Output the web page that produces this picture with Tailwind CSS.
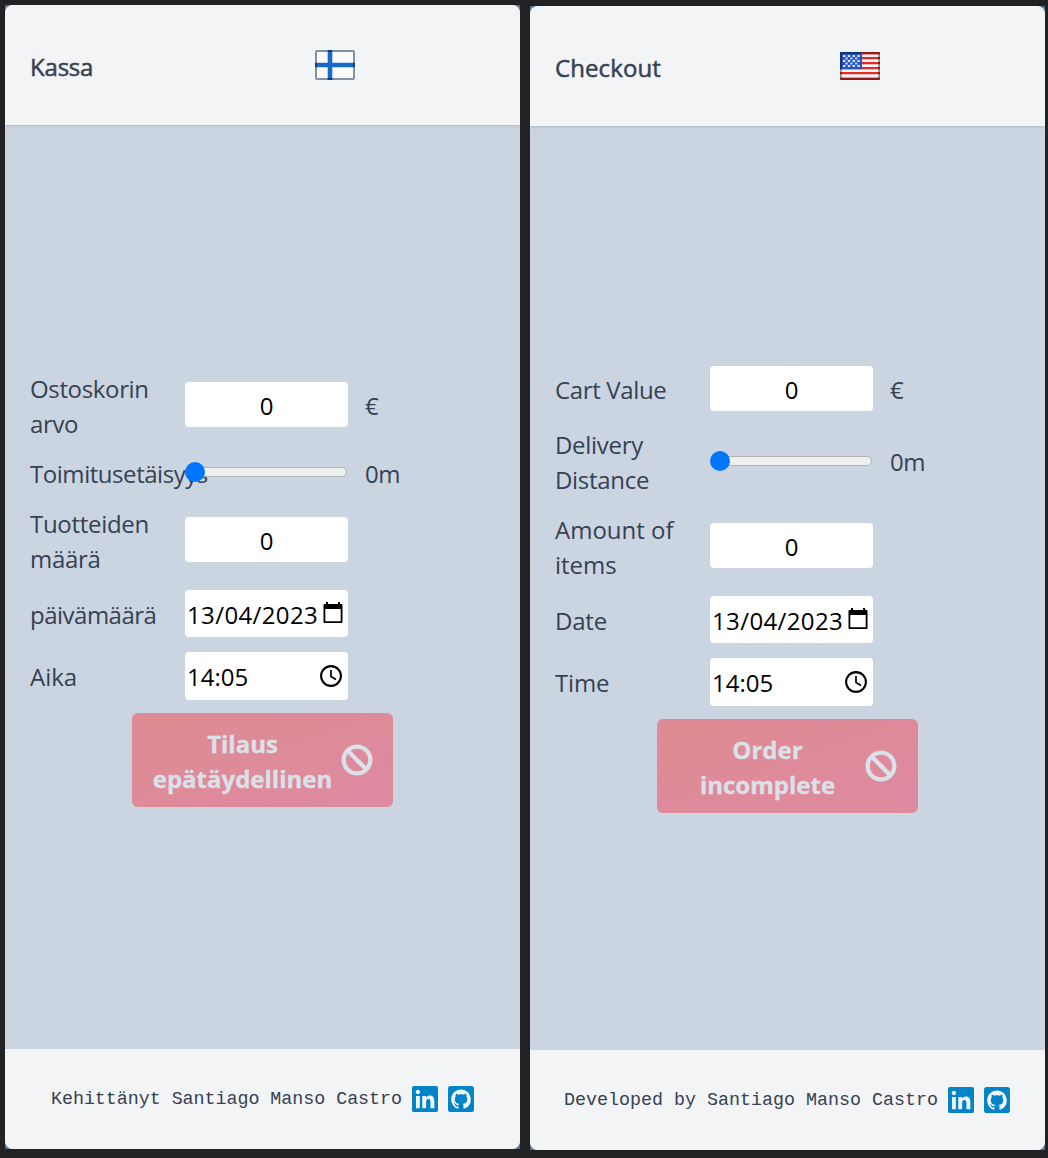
<!DOCTYPE html>
<html lang="en">
<head>
<meta charset="utf-8">
<title>Checkout</title>
<script src="https://cdn.jsdelivr.net/npm/@tailwindcss/browser@4"></script>
</head>
<body class="h-[1158px] w-[1048px] overflow-hidden bg-[#222224] font-['Open_Sans','Noto_Sans',sans-serif] text-2xl leading-[35px] text-gray-700">
<svg class="hidden">
  <symbol id="linkedin" viewBox="0 32 448 448"><path d="M416 32H31.9C14.3 32 0 46.5 0 64.3v383.4C0 465.5 14.3 480 31.9 480H416c17.6 0 32-14.5 32-32.3V64.3c0-17.8-14.4-32.3-32-32.3zM135.4 416H69V202.2h66.5V416zm-33.2-243c-21.3 0-38.5-17.3-38.5-38.5S80.9 96 102.2 96c21.2 0 38.5 17.3 38.5 38.5 0 21.3-17.2 38.5-38.5 38.5zm282.1 243h-66.4V312c0-24.8-.5-56.7-34.5-56.7-34.6 0-39.9 27-39.9 54.9V416h-66.4V202.2h63.7v29.2h.9c8.9-16.8 30.6-34.5 62.9-34.5 67.2 0 79.7 44.3 79.7 101.9V416z"/></symbol>
  <symbol id="github" viewBox="0 0 26 26"><rect width="26" height="26" rx="2.8"/><path fill="#f3f4f6" transform="translate(3.2 3.6) scale(1.225)" d="M8 0C3.58 0 0 3.58 0 8c0 3.54 2.29 6.53 5.47 7.59.4.07.55-.17.55-.38 0-.19-.01-.82-.01-1.49-2.01.37-2.53-.49-2.69-.94-.09-.23-.48-.94-.82-1.13-.28-.15-.68-.52-.01-.53.63-.01 1.08.58 1.23.82.72 1.21 1.87.87 2.33.66.07-.52.28-.87.51-1.07-1.78-.2-3.64-.89-3.64-3.95 0-.87.31-1.59.82-2.15-.08-.2-.36-1.02.08-2.12 0 0 .67-.21 2.2.82.64-.18 1.32-.27 2-.27s1.36.09 2 .27c1.53-1.04 2.2-.82 2.2-.82.44 1.1.16 1.92.08 2.12.51.56.82 1.27.82 2.15 0 3.07-1.87 3.75-3.65 3.95.29.25.54.73.54 1.48 0 1.07-.01 1.93-.01 2.2 0 .21.15.46.55.38A8.01 8.01 0 0 0 16 8c0-4.42-3.58-8-8-8z"/></symbol>
  <symbol id="ban" viewBox="0 0 32 32"><g fill="none" stroke="currentColor" stroke-width="4.3"><circle cx="16" cy="16" r="13.3"/><path d="M6.5 6.5l19 19"/></g></symbol>
  <symbol id="calendar" viewBox="0 0 20 22"><path fill-rule="evenodd" d="M3 0h2v2h10V0h2v2h1.5q1 0 1 1v17q0 1-1 1H1.500q-1 0-1-1V3q0-1 1-1H3zM2.300 7v12.200h15.400V7z"/></symbol>
  <symbol id="clock" viewBox="0 0 22 22"><g fill="none" stroke="currentColor"><circle cx="11" cy="11" r="9.900" stroke-width="2.100"/><path stroke-width="1.700" d="M11 5v6.500l5 3"/></g></symbol>
</svg>
<main class="grid grid-cols-[515px_515px] gap-x-2.5 pl-[5px] pt-[5px]">

  <section class="h-[1144px] bg-[#5f7590] rounded-[1px]">
    <div class="flex h-full flex-col overflow-hidden rounded-lg bg-[#cbd5e1]">
      <header class="z-10 flex h-[120px] shrink-0 items-center bg-gray-100 pl-[25px] shadow">
        <h1 class="w-[285px] pt-0.5 font-medium tracking-[-0.2px] [-webkit-text-stroke:0.5px]">Kassa</h1>
        <svg class="h-[30px] w-10" viewBox="0 0 40 30"><rect x="1" y="1" width="38" height="28" rx="1" fill="#fafafa" stroke="#82929f" stroke-width="2"/><path d="M12.700 2h4.600v26h-4.600zM2 12.700h36v4.600H2z" fill="#1969cb"/><path d="M12.700 0h4.600v2h-4.600zM12.700 28h4.600v2h-4.600zM0 12.700h2v4.600H0zM38 12.700h2v4.600h-2z" fill="#073d82"/></svg>
      </header>
      <div class="flex grow flex-col pl-[25px] pt-[247px]">
        <div class="grid grid-cols-[155px_163px_1fr] grid-rows-[70px_35px_70px_47px_48px] items-center gap-y-[15px]">
          <label class="-mt-0.5 w-[130px] tracking-[-0.35px]">Ostoskorin arvo</label>
          <div class="-mt-[5px] flex h-[45px] items-center justify-center rounded bg-white pt-px text-black">0</div>
          <span class="-mt-[3px] pl-[17px]">€</span>
          <label class="-mt-0.5 tracking-[-0.45px]">Toimitusetäisyys</label>
          <div class="relative -mt-[5px] flex h-5 items-center"><div class="h-2.5 w-[162px] rounded-full border border-[#b2b2b2] bg-[#efefef]"></div><div class="absolute left-0 size-5 rounded-full bg-[#0075ff]"></div></div>
          <span class="-mt-0.5 pl-[17px] tracking-[-0.5px]">0m</span>
          <label class="-mt-0.5 w-[130px] tracking-[-0.3px]">Tuotteiden määrä</label>
          <div class="-mt-[5px] flex h-[45px] items-center justify-center rounded bg-white pt-px text-black">0</div>
          <span></span>
          <label class="-mt-[2px] tracking-[-0.5px]">päivämäärä</label>
          <div class="-mt-[4px] flex h-[47px] items-center justify-between rounded bg-white pl-0.5 pr-[5px] text-black"><span class="pt-px tracking-[0.38px]">13/04/2023</span><svg class="mb-0.5 h-[22px] w-5 shrink-0"><use href="#calendar"/></svg></div>
          <span></span>
          <label class="-mt-[3px]">Aika</label>
          <div class="-mt-[4px] flex h-12 items-center justify-between rounded bg-white pl-0.5 pr-[6px] text-black"><span class="pt-px">14:05</span><svg class="size-[22px]"><use href="#clock"/></svg></div>
        </div>
        <button class="ml-[102px] mt-[11px] flex h-[94px] w-[261px] items-center rounded-md border-2 border-transparent bg-linear-to-br from-[#de8b92] to-[#de8aa1] pl-[17px] pr-[18px] font-bold text-[#dbe1e9]"><span class="w-[183px] pt-0.5 text-center [-webkit-text-stroke:0.3px]">Tilaus epätäydellinen</span><svg class="ml-[7px] size-8 shrink-0"><use href="#ban"/></svg></button>
      </div>
      <footer class="flex h-[100px] shrink-0 items-center bg-gray-100 pl-[46px] font-['Liberation_Mono',monospace] text-[18.33px]"><span class="w-[361px] whitespace-nowrap tracking-[-0.03px]">Kehittänyt Santiago Manso Castro</span><div class="flex gap-2.5 text-[#0284c7]"><svg class="size-[26px] fill-current"><use href="#linkedin"/></svg><svg class="size-[26px] fill-current"><use href="#github"/></svg></div></footer>
    </div>
  </section>

  <section class="mt-px h-[1144px] bg-[#5f7590] rounded-[1px]">
    <div class="flex h-full flex-col overflow-hidden rounded-lg bg-[#cbd5e1]">
      <header class="z-10 flex h-[120px] shrink-0 items-center bg-gray-100 pl-[25px] shadow">
        <h1 class="w-[285px] pt-0.5 font-medium tracking-[0.1px] [-webkit-text-stroke:0.5px]">Checkout</h1>
        <svg class="h-7 w-10" viewBox="0 0 40 28"><rect width="40" height="28" rx="1.500" fill="#f8f4f6"/><path d="M0 0h40v2.500H0zM0 5h40v2.300H0zM0 10h40v2.300H0zM0 15h40v2.300H0zM0 20h40v2.300H0zM0 25.500h40V28H0z" fill="#e32b27"/><path d="M0 0h22v17.300H0z" fill="#2354c5"/><path d="M3 4h17M3 9h17M3 14h17" stroke="#dce6fb" stroke-width="2.200" stroke-dasharray="2.400 2.400"/><path d="M5.400 6.500h13M5.400 11.500h13" stroke="#c4d3f5" stroke-width="2.200" stroke-dasharray="2.400 2.400"/><rect x=".9" y=".9" width="38.200" height="26.200" rx="1" fill="none" stroke="#000" stroke-opacity=".42" stroke-width="1.800"/></svg>
      </header>
      <div class="flex grow flex-col pl-[25px] pt-[240px]">
        <div class="grid grid-cols-[155px_163px_1fr] grid-rows-[47px_70px_70px_47px_48px] items-center gap-y-[15px]">
          <label class="tracking-[-0.35px]">Cart Value</label>
          <div class="-mt-[2px] flex h-[45px] items-center justify-center rounded bg-white pt-px text-black">0</div>
          <span class="pl-[17px]">€</span>
          <label class="-mt-0.5 w-[130px] tracking-[-0.3px]">Delivery Distance</label>
          <div class="relative -mt-[5px] flex h-5 items-center"><div class="h-2.5 w-[162px] rounded-full border border-[#b2b2b2] bg-[#efefef]"></div><div class="absolute left-0 size-5 rounded-full bg-[#0075ff]"></div></div>
          <span class="-mt-[3px] pl-[17px] tracking-[-0.5px]">0m</span>
          <label class="-mt-0.5 w-[150px]">Amount of items</label>
          <div class="-mt-[5px] flex h-[45px] items-center justify-center rounded bg-white pt-px text-black">0</div>
          <span></span>
          <label class="-mt-[2px] tracking-[-0.2px]">Date</label>
          <div class="-mt-[4px] flex h-[47px] items-center justify-between rounded bg-white pl-0.5 pr-[5px] text-black"><span class="pt-px tracking-[0.38px]">13/04/2023</span><svg class="mb-0.5 h-[22px] w-5 shrink-0"><use href="#calendar"/></svg></div>
          <span></span>
          <label class="-mt-[3px] tracking-[-0.2px]">Time</label>
          <div class="-mt-[4px] flex h-12 items-center justify-between rounded bg-white pl-0.5 pr-[6px] text-black"><span class="pt-px">14:05</span><svg class="size-[22px]"><use href="#clock"/></svg></div>
        </div>
        <button class="ml-[102px] mt-[11px] flex h-[94px] w-[261px] items-center rounded-md border-2 border-transparent bg-linear-to-br from-[#de8b92] to-[#de8aa1] pl-[17px] pr-[18px] font-bold text-[#dbe1e9]"><span class="w-[183px] pt-0.5 text-center [-webkit-text-stroke:0.3px]">Order<br>incomplete</span><svg class="ml-[6px] size-8 shrink-0"><use href="#ban"/></svg></button>
      </div>
      <footer class="flex h-[100px] shrink-0 items-center bg-gray-100 pl-[34px] font-['Liberation_Mono',monospace] text-[18.33px]"><span class="w-[384px] whitespace-nowrap">Developed by Santiago Manso Castro</span><div class="flex gap-2.5 text-[#0284c7]"><svg class="size-[26px] fill-current"><use href="#linkedin"/></svg><svg class="size-[26px] fill-current"><use href="#github"/></svg></div></footer>
    </div>
  </section>
</main>
</body>
</html>
